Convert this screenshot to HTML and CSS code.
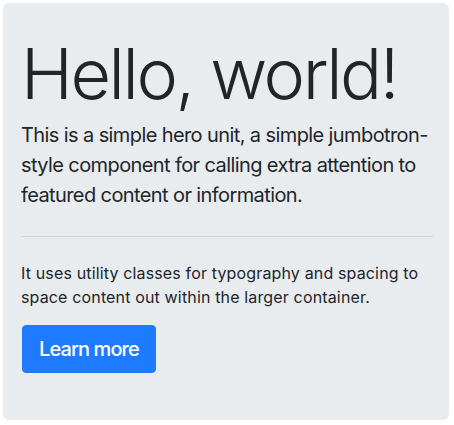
FILE: index.html
```html
<!DOCTYPE html>
<html lang="en">
<head>
<meta charset="utf-8">
<title>Jumbotron</title>
<link rel="stylesheet" href="styles.css">
</head>
<body>
<div class="jumbotron">
  <h1 class="display">Hello, world!</h1>
  <p class="lead">This is a simple hero unit, a simple jumbotron-style component for calling extra attention to featured content or information.</p>
  <hr class="rule">
  <p class="note">It uses utility classes for typography and spacing to space content out within the larger container.</p>
  <a class="btn" href="#">Learn more</a>
</div>
</body>
</html>
```
FILE: styles.css
```css
html, body {
  margin: 0;
  padding: 0;
  background: #ffffff;
}
body {
  font-family: Inter, "Liberation Sans", sans-serif;
  color: #212529;
}
.jumbotron {
  box-sizing: border-box;
  margin: 3px 5px 0 3px;
  height: 417px;
  padding: 29px 16px 0 18px;
  background: #e9ecef;
  border-radius: 6px;
}
.display {
  margin: 0 0 4px 0;
  font-size: 70px;
  font-weight: 300;
  line-height: 1.2;
  letter-spacing: -2.4px;
}
.lead {
  margin: 0;
  font-size: 20px;
  line-height: 30px;
  font-weight: 400;
  letter-spacing: -0.6px;
}
.rule {
  margin: 26px 0 0 0;
  border: 0;
  border-top: 1px solid rgba(0, 0, 0, 0.1);
}
.note {
  margin: 24px 0 0 0;
  font-size: 16px;
  line-height: 24px;
  letter-spacing: 0.15px;
}
.btn {
  display: inline-block;
  margin-top: 16px;
  margin-left: 1px;
  padding: 8px 16px;
  font-size: 20px;
  line-height: 30px;
  font-weight: 500;
  letter-spacing: -0.9px;
  color: #ffffff;
  background: #1e7bff;
  border: 1px solid #1e7bff;
  border-radius: 4px;
  text-decoration: none;
}
```
